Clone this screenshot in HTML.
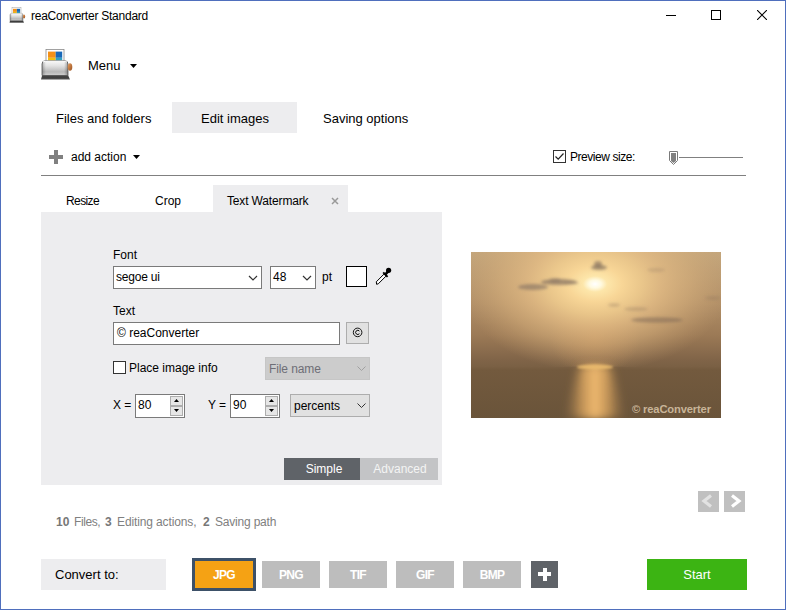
<!DOCTYPE html>
<html><head><meta charset="utf-8">
<style>
*{margin:0;padding:0;box-sizing:border-box}
html,body{width:786px;height:610px;overflow:hidden;background:#fff}
body{position:relative;font-family:"Liberation Sans",sans-serif;color:#000}
.a{position:absolute}
.t{position:absolute;white-space:nowrap;line-height:1}
.win{position:absolute;left:0;top:0;width:786px;height:610px;border:1px solid #4f6fbd}
</style></head><body>
<div class="win"></div>

<!-- title bar icon (small) -->
<svg class="a" style="left:9px;top:6.5px" width="17" height="16.5" viewBox="0 0 34 33">
  <defs>
    <linearGradient id="sbody" x1="0" y1="0" x2="0" y2="1"><stop offset="0" stop-color="#fafafa"/><stop offset="0.35" stop-color="#e2e2e2"/><stop offset="0.75" stop-color="#b8b8b8"/><stop offset="1" stop-color="#d0d0d0"/></linearGradient>
    <linearGradient id="sbodyh" x1="0" y1="0" x2="1" y2="0"><stop offset="0" stop-color="#000" stop-opacity="0.25"/><stop offset="0.15" stop-color="#000" stop-opacity="0"/><stop offset="0.85" stop-color="#000" stop-opacity="0"/><stop offset="1" stop-color="#000" stop-opacity="0.3"/></linearGradient>
    <linearGradient id="sbase" x1="0" y1="0" x2="0" y2="1"><stop offset="0" stop-color="#6a6a6a"/><stop offset="0.4" stop-color="#3a3a3a"/><stop offset="1" stop-color="#555"/></linearGradient>
    <linearGradient id="sknob" x1="0" y1="0" x2="1" y2="1"><stop offset="0" stop-color="#e8a060"/><stop offset="1" stop-color="#985020"/></linearGradient>
  </defs>
  <rect x="6" y="1.4" width="18" height="15" fill="#fff" stroke="#8a8a8a" stroke-width="0.8"/>
  <rect x="8" y="3.6" width="7.7" height="6.2" fill="#f49018"/>
  <rect x="8" y="9.8" width="7.7" height="5.4" fill="#f2be10"/>
  <rect x="8" y="12.5" width="7.7" height="2.7" fill="#d8c020" opacity="0.7"/>
  <rect x="15.7" y="3.6" width="6.5" height="6.2" fill="#1868b8"/>
  <rect x="15.7" y="9.8" width="6.5" height="5.4" fill="#30a0c0"/>
  <path d="M2 27.5V16Q2 12.7 5.5 12.7H24.5Q28 12.7 28 16V27.5Z" fill="url(#sbody)" stroke="#6a6a6a" stroke-width="0.9"/>
  <path d="M2 27.5V16Q2 12.7 5.5 12.7H24.5Q28 12.7 28 16V27.5Z" fill="url(#sbodyh)"/>
  <path d="M3 13.8Q5 13.2 8 13.2H22Q26 13.2 27 14" fill="none" stroke="#fff" stroke-width="1"/>
  <path d="M2.2 27L1 31.6H30L28 27Z" fill="url(#sbase)"/>
  <ellipse cx="30" cy="19" rx="2.3" ry="3.8" fill="url(#sknob)"/>
</svg>
<div class="t" style="left:31px;top:10px;font-size:12px;letter-spacing:-0.24px;color:#000">reaConverter Standard</div>

<!-- window controls -->
<div class="a" style="left:666px;top:15px;width:10px;height:1px;background:#000"></div>
<div class="a" style="left:711px;top:10px;width:10px;height:10px;border:1px solid #000"></div>
<svg class="a" style="left:757px;top:10px" width="10" height="10" viewBox="0 0 10 10"><path d="M0 0L10 10M10 0L0 10" stroke="#000" stroke-width="1.1"/></svg>

<!-- big app icon -->
<svg class="a" style="left:40px;top:48px" width="34" height="33" viewBox="0 0 34 33">
  <defs>
    <linearGradient id="body" x1="0" y1="0" x2="0" y2="1"><stop offset="0" stop-color="#fafafa"/><stop offset="0.35" stop-color="#e2e2e2"/><stop offset="0.75" stop-color="#b8b8b8"/><stop offset="1" stop-color="#d0d0d0"/></linearGradient>
    <linearGradient id="bodyh" x1="0" y1="0" x2="1" y2="0"><stop offset="0" stop-color="#000" stop-opacity="0.25"/><stop offset="0.15" stop-color="#000" stop-opacity="0"/><stop offset="0.85" stop-color="#000" stop-opacity="0"/><stop offset="1" stop-color="#000" stop-opacity="0.3"/></linearGradient>
    <linearGradient id="base" x1="0" y1="0" x2="0" y2="1"><stop offset="0" stop-color="#6a6a6a"/><stop offset="0.4" stop-color="#3a3a3a"/><stop offset="1" stop-color="#555"/></linearGradient>
    <linearGradient id="knob" x1="0" y1="0" x2="1" y2="1"><stop offset="0" stop-color="#e8a060"/><stop offset="1" stop-color="#985020"/></linearGradient>
  </defs>
  <rect x="6" y="1.4" width="18" height="15" fill="#fff" stroke="#8a8a8a" stroke-width="0.8"/>
  <rect x="8" y="3.6" width="7.7" height="6.2" fill="#f49018"/>
  <rect x="8" y="9.8" width="7.7" height="5.4" fill="#f2be10"/>
  <rect x="8" y="12.5" width="7.7" height="2.7" fill="#d8c020" opacity="0.7"/>
  <rect x="15.7" y="3.6" width="6.5" height="6.2" fill="#1868b8"/>
  <rect x="15.7" y="9.8" width="6.5" height="5.4" fill="#30a0c0"/>
  <path d="M2 27.5V16Q2 12.7 5.5 12.7H24.5Q28 12.7 28 16V27.5Z" fill="url(#body)" stroke="#6a6a6a" stroke-width="0.9"/>
  <path d="M2 27.5V16Q2 12.7 5.5 12.7H24.5Q28 12.7 28 16V27.5Z" fill="url(#bodyh)"/>
  <path d="M3 13.8Q5 13.2 8 13.2H22Q26 13.2 27 14" fill="none" stroke="#fff" stroke-width="1"/>
  <path d="M2.2 27L1 31.6H30L28 27Z" fill="url(#base)"/>
  <ellipse cx="30" cy="19" rx="2.3" ry="3.8" fill="url(#knob)"/>
</svg>
<div class="t" style="left:88px;top:59px;font-size:13px">Menu</div>
<svg class="a" style="left:130px;top:64px" width="7" height="4" viewBox="0 0 7 4"><path d="M0 0H7L3.5 4Z" fill="#000"/></svg>

<!-- main tabs -->
<div class="a" style="left:172px;top:102px;width:125px;height:31px;background:#ededef"></div>
<div class="t" style="left:56px;top:112px;font-size:13px">Files and folders</div>
<div class="t" style="left:201px;top:112px;font-size:13px">Edit images</div>
<div class="t" style="left:323px;top:112px;font-size:13px">Saving options</div>

<!-- add action -->
<div class="a" style="left:49px;top:155px;width:14px;height:4px;background:#808080"></div>
<div class="a" style="left:54px;top:150px;width:4px;height:14px;background:#808080"></div>
<div class="t" style="left:71px;top:151px;font-size:12px">add action</div>
<svg class="a" style="left:133px;top:155px" width="7" height="4" viewBox="0 0 7 4"><path d="M0 0H7L3.5 4Z" fill="#000"/></svg>

<!-- preview size -->
<div class="a" style="left:553px;top:150px;width:13px;height:13px;border:1px solid #333;background:#fff"></div>
<svg class="a" style="left:553px;top:150px" width="13" height="13" viewBox="0 0 13 13"><path d="M2.5 6.5L5.2 9.2L10.5 3.5" fill="none" stroke="#222" stroke-width="1.2"/></svg>
<div class="t" style="left:570px;top:151px;font-size:12px;letter-spacing:-0.45px">Preview size:</div>
<div class="a" style="left:679px;top:157px;width:64px;height:1px;background:#808080"></div>
<svg class="a" style="left:669px;top:151px" width="9" height="14" viewBox="0 0 9 14">
  <path d="M0.5 0.5H8.5V9.5L4.5 13.5L0.5 9.5Z" fill="#fff" stroke="#7a7a7a" stroke-width="1"/>
  <path d="M2 2H7V10L4.5 12L2 10Z" fill="#808080"/>
</svg>

<div class="a" style="left:41px;top:175px;width:705px;height:1px;background:#808080"></div>

<!-- sub tabs -->
<div class="a" style="left:213px;top:185px;width:135px;height:27px;background:#ededef"></div>
<div class="t" style="left:66px;top:195px;font-size:12px;letter-spacing:-0.6px">Resize</div>
<div class="t" style="left:155px;top:195px;font-size:12px">Crop</div>
<div class="t" style="left:227px;top:195px;font-size:12px;letter-spacing:-0.15px">Text Watermark</div>
<svg class="a" style="left:331px;top:197px" width="8" height="8" viewBox="0 0 8 8"><path d="M1 1L7 7M7 1L1 7" stroke="#999" stroke-width="1.5"/></svg>

<!-- panel -->
<div class="a" style="left:41px;top:212px;width:401px;height:273px;background:#ededef"></div>

<div class="t" style="left:113px;top:249px;font-size:12px">Font</div>
<div class="a" style="left:113px;top:266px;width:149px;height:23px;border:1px solid #7a7a7a;background:#fff"></div>
<div class="t" style="left:116px;top:271px;font-size:12px;letter-spacing:-0.2px">segoe ui</div>
<svg class="a" style="left:248px;top:275px" width="10" height="6" viewBox="0 0 10 6"><path d="M1 1L5 5L9 1" fill="none" stroke="#333" stroke-width="1.2"/></svg>

<div class="a" style="left:270px;top:266px;width:46px;height:23px;border:1px solid #7a7a7a;background:#fff"></div>
<div class="t" style="left:273px;top:271px;font-size:12px">48</div>
<svg class="a" style="left:302px;top:275px" width="10" height="6" viewBox="0 0 10 6"><path d="M1 1L5 5L9 1" fill="none" stroke="#333" stroke-width="1.2"/></svg>
<div class="t" style="left:322px;top:271px;font-size:12px">pt</div>

<div class="a" style="left:346px;top:266px;width:21px;height:21px;border:1px solid #000;background:#fff"></div>
<svg class="a" style="left:374px;top:266px" width="19" height="19" viewBox="0 0 19 19">
  <path d="M2.3 15.8L10 8.1L12 10.1L4.3 17.8L2.6 18.3Z" fill="#fff" stroke="#000" stroke-width="1" stroke-linejoin="round"/>
  <path d="M9.2 6.4L13.6 10.8" stroke="#000" stroke-width="1.9"/>
  <path d="M11.2 8.6L14.6 4.8" stroke="#000" stroke-width="2.6"/>
  <circle cx="14.6" cy="4.3" r="2.6" fill="#000"/>
</svg>

<div class="t" style="left:113px;top:305px;font-size:12px">Text</div>
<div class="a" style="left:113px;top:322px;width:227px;height:23px;border:1px solid #7a7a7a;background:#fff"></div>
<div class="t" style="left:117px;top:327px;font-size:12px">© reaConverter</div>
<div class="a" style="left:346px;top:322px;width:23px;height:22px;border:1px solid #adadad;background:#e1e1e1"></div>
<svg class="a" style="left:352px;top:327px" width="11" height="11" viewBox="0 0 11 11"><circle cx="5.6" cy="5.4" r="4.3" fill="none" stroke="#000" stroke-width="0.9"/><path d="M7.4 4.1A2.1 2.1 0 1 0 7.4 6.7" fill="none" stroke="#000" stroke-width="0.95"/></svg>

<div class="a" style="left:113px;top:361px;width:13px;height:13px;border:1px solid #333;background:#fff"></div>
<div class="t" style="left:129px;top:362px;font-size:12px">Place image info</div>
<div class="a" style="left:265px;top:357px;width:105px;height:23px;border:1px solid #c6c6c6;background:#cccccc"></div>
<div class="t" style="left:269px;top:363px;font-size:12px;color:#6e6e76;letter-spacing:-0.1px">File name</div>
<svg class="a" style="left:357px;top:366px" width="9" height="5" viewBox="0 0 9 5"><path d="M0.5 0.5L4.5 4.5L8.5 0.5" fill="none" stroke="#a0a0a0" stroke-width="1"/></svg>

<div class="t" style="left:113px;top:399px;font-size:12px">X =</div>
<div class="a" style="left:135px;top:394px;width:50px;height:24px;border:1px solid #7a7a7a;background:#fff"></div>
<div class="t" style="left:138px;top:399px;font-size:12px">80</div>
<div class="a" style="left:170px;top:396px;width:13px;height:10px;border:1px solid #adadad;background:#e6e6e6"></div>
<div class="a" style="left:170px;top:406px;width:13px;height:10px;border:1px solid #adadad;background:#e6e6e6"></div>
<svg class="a" style="left:174px;top:399px" width="5" height="3" viewBox="0 0 5 3"><path d="M0 3H5L2.5 0Z" fill="#000"/></svg>
<svg class="a" style="left:174px;top:409px" width="5" height="3" viewBox="0 0 5 3"><path d="M0 0H5L2.5 3Z" fill="#000"/></svg>

<div class="t" style="left:208px;top:399px;font-size:12px">Y =</div>
<div class="a" style="left:230px;top:394px;width:50px;height:24px;border:1px solid #7a7a7a;background:#fff"></div>
<div class="t" style="left:233px;top:399px;font-size:12px">90</div>
<div class="a" style="left:265px;top:396px;width:13px;height:10px;border:1px solid #adadad;background:#e6e6e6"></div>
<div class="a" style="left:265px;top:406px;width:13px;height:10px;border:1px solid #adadad;background:#e6e6e6"></div>
<svg class="a" style="left:269px;top:399px" width="5" height="3" viewBox="0 0 5 3"><path d="M0 3H5L2.5 0Z" fill="#000"/></svg>
<svg class="a" style="left:269px;top:409px" width="5" height="3" viewBox="0 0 5 3"><path d="M0 0H5L2.5 3Z" fill="#000"/></svg>

<div class="a" style="left:290px;top:394px;width:80px;height:23px;border:1px solid #adadad;background:#e1e1e1"></div>
<div class="t" style="left:294px;top:400px;font-size:12px">percents</div>
<svg class="a" style="left:357px;top:403px" width="9" height="5" viewBox="0 0 9 5"><path d="M0.5 0.5L4.5 4.5L8.5 0.5" fill="none" stroke="#333" stroke-width="1"/></svg>

<div class="a" style="left:284px;top:458px;width:76px;height:22px;background:#5f6368"></div>
<div class="a" style="left:360px;top:458px;width:78px;height:22px;background:#c3c4c6"></div>
<div class="t" style="left:286px;top:463px;width:76px;text-align:center;font-size:12px;color:#fff">Simple</div>
<div class="t" style="left:361px;top:463px;width:78px;text-align:center;font-size:12px;color:#f4f4f4">Advanced</div>

<!-- preview image -->
<svg class="a" style="left:471px;top:252px" width="250" height="166" viewBox="0 0 250 166">
  <defs>
    <linearGradient id="sky" x1="0" y1="0" x2="0" y2="166" gradientUnits="userSpaceOnUse">
      <stop offset="0" stop-color="#c4a67c"/><stop offset="0.3" stop-color="#b29068"/><stop offset="0.5" stop-color="#9c7a56"/><stop offset="0.65" stop-color="#806448"/><stop offset="0.69" stop-color="#7a6044"/><stop offset="0.71" stop-color="#735a3e"/><stop offset="1" stop-color="#6a543a"/>
    </linearGradient>
    <radialGradient id="sun" cx="124" cy="32" r="1" gradientUnits="userSpaceOnUse" gradientTransform="translate(124 32) scale(135 88) translate(-124 -32)">
      <stop offset="0" stop-color="#ffffff"/><stop offset="0.045" stop-color="#fffae0"/><stop offset="0.09" stop-color="#fde6aa"/><stop offset="0.2" stop-color="#fad898" stop-opacity="0.97"/><stop offset="0.35" stop-color="#f0cc8e" stop-opacity="0.88"/><stop offset="0.5" stop-color="#e6be86" stop-opacity="0.75"/><stop offset="0.7" stop-color="#dcb47e" stop-opacity="0.5"/><stop offset="0.85" stop-color="#d4ac78" stop-opacity="0.25"/><stop offset="1" stop-color="#c8a070" stop-opacity="0"/>
    </radialGradient>
    <radialGradient id="col" cx="124" cy="85" r="1" gradientUnits="userSpaceOnUse" gradientTransform="translate(124 85) scale(45 40) translate(-124 -85)">
      <stop offset="0" stop-color="#c8925a" stop-opacity="0.55"/><stop offset="1" stop-color="#c8925a" stop-opacity="0"/>
    </radialGradient>
    <linearGradient id="refl" x1="0" y1="0" x2="1" y2="0">
      <stop offset="0" stop-color="#d09a58" stop-opacity="0"/><stop offset="0.25" stop-color="#dca660" stop-opacity="0.6"/><stop offset="0.5" stop-color="#f0ba70" stop-opacity="1"/><stop offset="0.75" stop-color="#dca660" stop-opacity="0.6"/><stop offset="1" stop-color="#d09a58" stop-opacity="0"/>
    </linearGradient>
    <filter id="bl" x="-50%" y="-50%" width="200%" height="200%"><feGaussianBlur stdDeviation="1.6"/></filter>
    <filter id="bl2" x="-50%" y="-50%" width="200%" height="200%"><feGaussianBlur stdDeviation="2.5"/></filter>
    <filter id="bl4" x="-50%" y="-50%" width="200%" height="200%"><feGaussianBlur stdDeviation="4"/></filter>
    <filter id="bl3" x="-50%" y="-50%" width="200%" height="200%"><feGaussianBlur stdDeviation="0.8"/></filter>
  </defs>
  <rect width="250" height="166" fill="url(#sky)"/>
  <rect width="250" height="114" fill="url(#col)"/>
  <rect width="250" height="115" fill="url(#sun)"/>
  <g filter="url(#bl)">
    <ellipse cx="62" cy="35" rx="15" ry="3" fill="#806e60" opacity="0.6"/>
    <ellipse cx="88" cy="30" rx="18" ry="3" fill="#7c6a5c" opacity="0.65"/>
    <ellipse cx="84" cy="28" rx="6" ry="2" fill="#7c6a5c" opacity="0.4"/>
    <ellipse cx="100" cy="31" rx="8" ry="1.5" fill="#8a7462" opacity="0.4"/>
    <ellipse cx="128" cy="15.5" rx="8" ry="2.5" fill="#7a6858" opacity="0.65"/><ellipse cx="127" cy="12" rx="4" ry="3" fill="#7a6858" opacity="0.6"/>
    <ellipse cx="186" cy="68" rx="26" ry="2.8" fill="#7a6452" opacity="0.5"/>
    <ellipse cx="165" cy="57" rx="12" ry="2" fill="#8a7058" opacity="0.3"/>
    <ellipse cx="143" cy="53" rx="6" ry="2" fill="#8a7058" opacity="0.3"/>
    <ellipse cx="185" cy="18" rx="9" ry="2" fill="#9a8068" opacity="0.3"/>
    <ellipse cx="242" cy="46" rx="8" ry="2" fill="#8a7058" opacity="0.3"/>
  </g>
  <path d="M108 114H140L154 166H94Z" fill="url(#refl)" filter="url(#bl4)"/>
  <path d="M113 114H135L144 166H104Z" fill="url(#refl)" opacity="0.5" filter="url(#bl2)"/>
  <ellipse cx="124" cy="115" rx="18" ry="2.5" fill="#f0c070" opacity="0.8" filter="url(#bl3)"/>
  <text x="161" y="161" font-family="Liberation Sans" font-size="11.2" font-weight="bold" letter-spacing="-0.15" fill="#c8b498">© reaConverter</text>
</svg>

<!-- nav arrows -->
<div class="a" style="left:698px;top:491px;width:21px;height:21px;background:#c0c0c0"></div>
<div class="a" style="left:724px;top:491px;width:21px;height:21px;background:#c0c0c0"></div>
<svg class="a" style="left:698px;top:491px" width="21" height="21" viewBox="0 0 21 21"><path d="M13 4.5L6 10L13 15.5" fill="none" stroke="#e2e2e2" stroke-width="3.2"/></svg>
<svg class="a" style="left:724px;top:491px" width="21" height="21" viewBox="0 0 21 21"><path d="M8 4.5L15 10L8 15.5" fill="none" stroke="#fff" stroke-width="3.2"/></svg>

<!-- status -->
<div class="t" style="left:56px;top:516px;font-size:12px;font-weight:bold;color:#777">10</div>
<div class="t" style="left:74px;top:516px;font-size:12px;color:#808080;letter-spacing:-0.4px">Files,</div>
<div class="t" style="left:105px;top:516px;font-size:12px;font-weight:bold;color:#777">3</div>
<div class="t" style="left:117px;top:516px;font-size:12px;color:#808080;letter-spacing:-0.12px">Editing actions,</div>
<div class="t" style="left:203px;top:516px;font-size:12px;font-weight:bold;color:#777">2</div>
<div class="t" style="left:215px;top:516px;font-size:12px;color:#808080;letter-spacing:-0.2px">Saving path</div>

<!-- convert bar -->
<div class="a" style="left:41px;top:559px;width:125px;height:31px;background:#ededef"></div>
<div class="t" style="left:55px;top:568px;font-size:13px">Convert to:</div>
<div class="a" style="left:192px;top:558px;width:64px;height:33px;border:3px solid #3d5168;background:#f5a214"></div>
<div class="t" style="left:192px;top:569px;width:64px;text-align:center;font-size:12px;font-weight:bold;letter-spacing:-0.7px;color:#fff">JPG</div>
<div class="a" style="left:262px;top:561px;width:58px;height:27px;background:#bdbdbd"></div>
<div class="t" style="left:262px;top:569px;width:58px;text-align:center;font-size:12px;font-weight:bold;letter-spacing:-0.7px;color:#fff">PNG</div>
<div class="a" style="left:329px;top:561px;width:58px;height:27px;background:#bdbdbd"></div>
<div class="t" style="left:329px;top:569px;width:58px;text-align:center;font-size:12px;font-weight:bold;letter-spacing:-0.7px;color:#fff">TIF</div>
<div class="a" style="left:396px;top:561px;width:58px;height:27px;background:#bdbdbd"></div>
<div class="t" style="left:396px;top:569px;width:58px;text-align:center;font-size:12px;font-weight:bold;letter-spacing:-0.7px;color:#fff">GIF</div>
<div class="a" style="left:463px;top:561px;width:58px;height:27px;background:#bdbdbd"></div>
<div class="t" style="left:463px;top:569px;width:58px;text-align:center;font-size:12px;font-weight:bold;letter-spacing:-0.7px;color:#fff">BMP</div>
<div class="a" style="left:531px;top:561px;width:27px;height:27px;background:#5f6368"></div>
<div class="a" style="left:538px;top:572px;width:13px;height:4px;background:#fff"></div>
<div class="a" style="left:543px;top:568px;width:4px;height:13px;background:#fff"></div>

<div class="a" style="left:647px;top:559px;width:100px;height:31px;background:#3cb413"></div>
<div class="t" style="left:647px;top:568px;width:100px;text-align:center;font-size:13px;color:#fff">Start</div>
</body></html>
